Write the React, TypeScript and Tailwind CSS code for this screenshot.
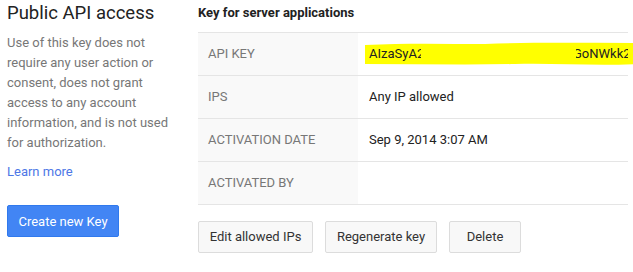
import React from "react";

const rows: { label: string; value: React.ReactNode }[] = [
  { label: "API KEY", value: null },
  { label: "IPS", value: "Any IP allowed" },
  { label: "ACTIVATION DATE", value: "Sep 9, 2014 3:07 AM" },
  { label: "ACTIVATED BY", value: "" },
];

function KeyValue() {
  return (
    <div className="relative h-full w-full flex items-center">
      <svg
        className="absolute left-[-4px] top-[9px]"
        width="272"
        height="24"
        viewBox="0 0 272 24"
        preserveAspectRatio="none"
      >
        <path
          d="M0 3 C40 1 80 2 120 2 C170 0 220 1 272 1 L272 22 C230 24 190 21 150 22 C100 23 50 22 0 22 Z"
          fill="#ffff00"
        />
      </svg>
      <span className="relative w-[52px] overflow-hidden whitespace-nowrap text-[13px] text-[#222]">AIzaSyA2</span>
      <span className="relative ml-auto w-[52px] overflow-hidden whitespace-nowrap text-[13px] text-[#222]">
        <span className="inline-block ml-[-3px]">GoNWkk2</span>
      </span>
    </div>
  );
}

export default function App() {
  return (
    <div
      className="w-[633px] h-[272px] bg-white flex overflow-hidden"
      style={{ fontFamily: "Roboto, 'Liberation Sans', sans-serif" }}
    >
      <div className="w-[191px] shrink-0 pl-[7px] pr-[6px]">
        <h1 className="text-[18.5px] leading-[24px] text-[#222] mt-[1px]">Public API access</h1>
        <p className="mt-[8px] text-[13px] leading-[20px] text-[#777]">
          Use of this key does not require any user action or consent, does not grant access to any account
          information, and is not used for authorization.
        </p>
        <a className="block mt-[9px] text-[13px] leading-[20px] text-[#4d77e6]">Learn more</a>
        <button className="mt-[23px] w-[112px] h-[32px] rounded-[2px] bg-[#4285f4] border border-[#3079ed] text-white text-[13px] leading-none">
          Create new Key
        </button>
      </div>
      <div className="w-[430px] ml-[7px] shrink-0">
        <div className="h-[25px] pt-[4px] text-[13px] leading-[18px] font-bold text-[#222]">
          Key for server applications
        </div>
        <div className="mt-[7px] border-t border-[#e5e5e5]">
          {rows.map((r) => (
            <div key={r.label} className="flex h-[43px] border-b border-[#e5e5e5]">
              <div className="w-[160px] bg-[#f9f9f9] pl-[10px] flex items-center text-[13px] text-[#777]">
                {r.label}
              </div>
              <div className="flex-1 pl-[11px] flex items-center text-[13px] text-[#222]">
                {r.label === "API KEY" ? <KeyValue /> : r.value}
              </div>
            </div>
          ))}
        </div>
        <div className="mt-[16px] flex gap-[12px]">
          <button className="w-[115px] h-[32px] rounded-[2px] bg-[#f8f8f8] border border-[#dcdcdc] text-[13px] text-[#333]">
            Edit allowed IPs
          </button>
          <button className="w-[112px] h-[32px] rounded-[2px] bg-[#f8f8f8] border border-[#dcdcdc] text-[13px] text-[#333]">
            Regenerate key
          </button>
          <button className="w-[72px] h-[32px] rounded-[2px] bg-[#f8f8f8] border border-[#dcdcdc] text-[13px] text-[#333]">
            Delete
          </button>
        </div>
      </div>
    </div>
  );
}
